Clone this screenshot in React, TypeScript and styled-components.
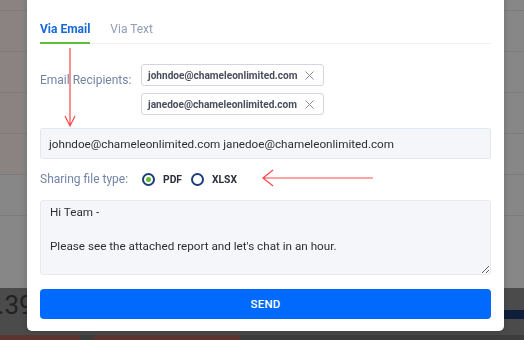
import styled, { createGlobalStyle } from "styled-components";

const GlobalStyle = createGlobalStyle`
  html, body {
    margin: 0;
    padding: 0;
  }
  body {
    width: 524px;
    height: 340px;
    overflow: hidden;
    background: #878787;
    font-family: Roboto, "Noto Sans", Arial, sans-serif;
  }
`;

const Backdrop = styled.div`
  width: 524px;
  height: 340px;
  display: flex;
  flex-direction: column;
  background: #878787;
`;

const TableRow = styled.div<{ $h: number; $tinted?: boolean; $line?: boolean }>`
  flex: none;
  height: ${(p) => p.$h}px;
  box-sizing: border-box;
  border-top: ${(p) => (p.$line ? "1px solid #7c7c7c" : "none")};
  background: ${(p) =>
    p.$tinted
      ? "linear-gradient(to right, #8b8381 0 23px, transparent 23px)"
      : "transparent"};
`;

const DarkBar = styled.div`
  flex: none;
  height: 47px;
  background: #4b4b4b;
  display: flex;
  align-items: flex-start;
  justify-content: space-between;
  overflow: hidden;
`;

const BigNumber = styled.span`
  margin: 2px 0 0 -17px;
  font-size: 26px;
  line-height: 30px;
  color: #222;
`;

const NavyBar = styled.div`
  width: 60px;
  height: 9px;
  margin-top: 22px;
  background: #0e1e3b;
`;

const BottomStrip = styled.div`
  flex: 1;
  display: flex;
  gap: 14px;
  background: #3d3d3d;
`;

const StripCell = styled.div<{ $w: number; $c: string }>`
  width: ${(p) => p.$w}px;
  background: ${(p) => p.$c};
`;

const Modal = styled.div`
  position: fixed;
  left: 27px;
  top: -12px;
  width: 477px;
  box-sizing: border-box;
  padding: 33px 13px 12px;
  background: #fff;
  border-radius: 5px;
  box-shadow: 0 1px 6px rgba(0, 0, 0, 0.18);
  display: flex;
  flex-direction: column;
`;

const TabBar = styled.div`
  display: flex;
  gap: 20px;
  border-bottom: 1px solid #f1f2f5;
`;

const Tab = styled.div<{ $active?: boolean }>`
  font-size: 12px;
  line-height: 16px;
  font-weight: ${(p) => (p.$active ? 700 : 400)};
  color: ${(p) => (p.$active ? "#1769d8" : "#8f9db5")};
  padding-bottom: 5px;
  margin-bottom: -1px;
  border-bottom: 2px solid ${(p) => (p.$active ? "#5cbf36" : "transparent")};
`;

const FieldRow = styled.div<{ $top: number; $center?: boolean }>`
  display: flex;
  align-items: ${(p) => (p.$center ? "center" : "flex-start")};
  margin-top: ${(p) => p.$top}px;
`;

const Label = styled.div<{ $w: number }>`
  width: ${(p) => p.$w}px;
  flex: none;
  font-size: 12px;
  line-height: 16px;
  color: #7285a7;
`;

const ChipList = styled.div`
  display: flex;
  flex-direction: column;
  gap: 7px;
  margin-top: -8px;
`;

const Chip = styled.div`
  width: 183px;
  height: 22px;
  box-sizing: border-box;
  display: flex;
  align-items: center;
  justify-content: space-between;
  padding: 0 9px 0 6px;
  border: 1px solid #d3d6de;
  border-radius: 3px;
  font-size: 10.1px;
  font-weight: 700;
  color: #4b4f5d;
`;

const TextInput = styled.div`
  margin-top: 13px;
  height: 31px;
  box-sizing: border-box;
  display: flex;
  align-items: center;
  padding: 0 8px;
  background: #f5f6f9;
  border: 1px solid #e4e8ee;
  border-top-color: #dcecf1;
  border-radius: 3px;
  font-size: 11.7px;
  color: #2e2e2e;
`;

const Radio = styled.span<{ $checked?: boolean }>`
  width: 13px;
  height: 13px;
  box-sizing: border-box;
  border-radius: 50%;
  border: 2px solid #1c3d7d;
  display: flex;
  align-items: center;
  justify-content: center;
  &::after {
    content: "";
    width: 5px;
    height: 5px;
    border-radius: 50%;
    background: ${(p) => (p.$checked ? "#5cbf2c" : "transparent")};
  }
`;

const RadioText = styled.span`
  margin: 0 9px 0 8px;
  font-size: 10.3px;
  font-weight: 700;
  color: #2b2f3a;
`;

const MessageBox = styled.textarea`
  margin-top: 13px;
  height: 75px;
  box-sizing: border-box;
  padding: 3px 9px;
  background: #f5f6f9;
  border: 1px solid #e8eaf0;
  border-radius: 3px;
  font-family: Roboto, "Noto Sans", Arial, sans-serif;
  font-size: 11.7px;
  line-height: 17px;
  color: #2e2e2e;
  resize: vertical;
  outline: none;
`;

const SendButton = styled.button`
  margin-top: 14px;
  height: 30px;
  flex: none;
  border: none;
  border-radius: 4px;
  background: #006aff;
  color: #fff;
  font-family: Roboto, "Noto Sans", Arial, sans-serif;
  font-size: 11.5px;
  font-weight: 500;
  letter-spacing: 0.2px;
`;

const Annotations = styled.svg`
  position: fixed;
  left: 0;
  top: 0;
  pointer-events: none;
`;

const CloseIcon = () => (
  <svg width="9" height="9" viewBox="0 0 9 9">
    <path d="M0.5 0.5L8.5 8.5M8.5 0.5L0.5 8.5" stroke="#8a8d96" strokeWidth="1" />
  </svg>
);

const recipients = ["johndoe@chameleonlimited.com", "janedoe@chameleonlimited.com"];

export default function App() {
  return (
    <>
      <GlobalStyle />
      <Backdrop>
        <TableRow $h={10} $tinted />
        {[0, 1, 2, 3, 4].map((i) => (
          <TableRow key={i} $h={41} $tinted={i < 4} $line />
        ))}
        <TableRow $h={73} $line />
        <DarkBar>
          <BigNumber>8.39</BigNumber>
          <NavyBar />
        </DarkBar>
        <BottomStrip>
          <StripCell $w={80} $c="#5e3430" />
          <StripCell $w={146} $c="#5e3430" />
        </BottomStrip>
      </Backdrop>

      <Modal>
        <TabBar>
          <Tab $active>Via Email</Tab>
          <Tab>Via Text</Tab>
        </TabBar>

        <FieldRow $top={28}>
          <Label $w={101}>Email Recipients:</Label>
          <ChipList>
            {recipients.map((r) => (
              <Chip key={r}>
                {r}
                <CloseIcon />
              </Chip>
            ))}
          </ChipList>
        </FieldRow>

        <TextInput>{recipients.join(" ")}</TextInput>

        <FieldRow $top={12} $center>
          <Label $w={102}>Sharing file type:</Label>
          <Radio $checked />
          <RadioText>PDF</RadioText>
          <Radio />
          <RadioText>XLSX</RadioText>
        </FieldRow>

        <MessageBox
          defaultValue={"Hi Team -\n\nPlease see the attached report and let's chat in an hour."}
        />

        <SendButton>SEND</SendButton>
      </Modal>

      <Annotations width="524" height="340">
        <g stroke="#ff4646" strokeWidth="1.2" fill="none">
          <path d="M70 48V126M65 116L70 126L75 116" />
          <path d="M373 178H263M273 170L263 178L273 186" />
        </g>
      </Annotations>
    </>
  );
}
